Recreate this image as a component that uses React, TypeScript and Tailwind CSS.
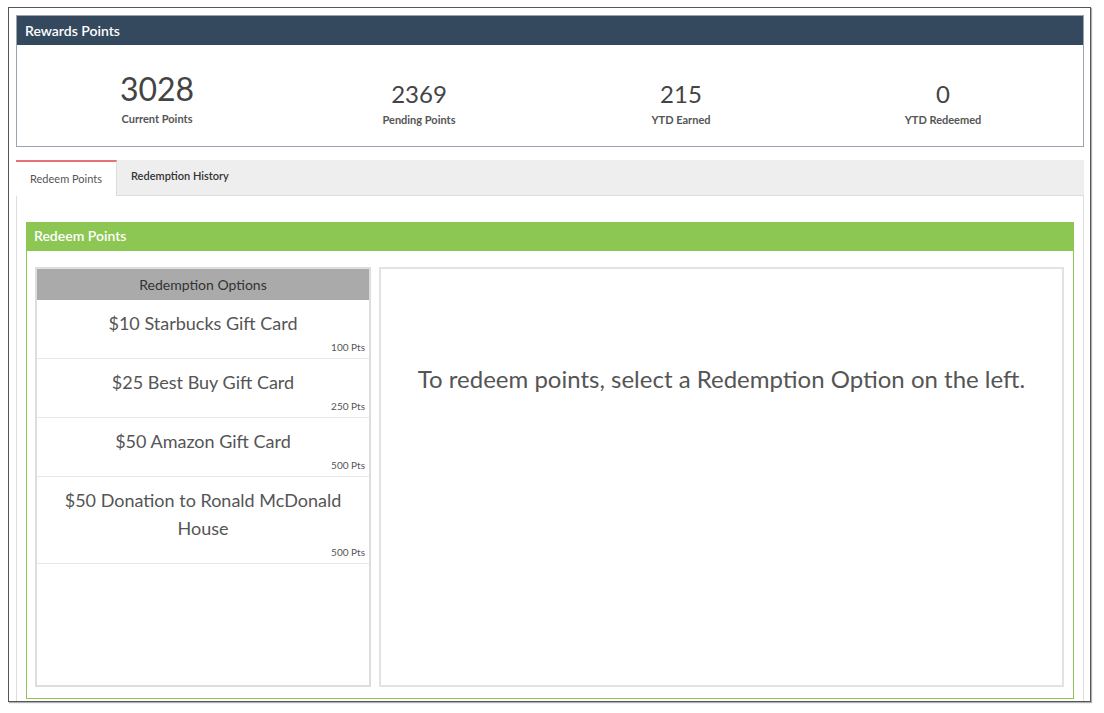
import React from "react";

const stats = [
  { value: "3028", label: "Current Points", big: true },
  { value: "2369", label: "Pending Points" },
  { value: "215", label: "YTD Earned" },
  { value: "0", label: "YTD Redeemed" },
];

const options = [
  { name: "$10 Starbucks Gift Card", pts: 100 },
  { name: "$25 Best Buy Gift Card", pts: 250 },
  { name: "$50 Amazon Gift Card", pts: 500 },
  { name: "$50 Donation to Ronald McDonald House", pts: 500 },
];

export default function App() {
  return (
    <div
      className="w-[1104px] h-[713px] bg-white pt-[7px] pl-[8px] text-[#555]"
      style={{ fontFamily: "Lato, 'Open Sans', sans-serif" }}
    >
      <div className="w-[1083px] h-[695px] border border-[#555] overflow-hidden pt-[7px] pl-[7px] pr-[6px] shadow-[1px_1px_1px_rgba(0,0,0,0.3)]">
        {/* rewards summary */}
        <div className="border border-[#9aa4ae]">
          <div className="h-[29px] bg-[#34495e] px-[8px] pb-[1px] flex items-center text-white text-[14px] font-semibold">
            Rewards Points
          </div>
          <div className="h-[101px] grid grid-cols-4 px-[9px]">
            {stats.map((s) => (
              <div key={s.label} className="flex flex-col items-center">
                {s.big ? (
                  <div className="mt-[26px] text-[32px] leading-[36px] text-[#444]">{s.value}</div>
                ) : (
                  <div className="mt-[34px] text-[24px] leading-[30px] text-[#444]">{s.value}</div>
                )}
                <div className={`text-[11px] font-bold text-[#555] ${s.big ? "mt-[4px]" : "mt-[3px]"}`}>
                  {s.label}
                </div>
              </div>
            ))}
          </div>
        </div>

        {/* tabs */}
        <div className="mt-[13px] h-[36px] bg-[#eee] border-b border-[#ddd] flex">
          <div className="w-[101px] h-[36px] bg-white border-t-2 border-[#e57373] border-r border-r-[#ddd] flex items-center justify-center text-[11px] text-[#555]">
            Redeem Points
          </div>
          <div className="px-[14px] flex items-center text-[11px] font-semibold text-[#333] -mt-[2px]">
            Redemption History
          </div>
        </div>

        <div className="border-x border-[#ddd] px-[9px] pt-[26px] h-[520px]">
          <div className="border border-[#8cc653]">
            <div className="h-[28px] bg-[#8cc653] px-[7px] pb-[3px] flex items-center text-white text-[14px] font-semibold">
              Redeem Points
            </div>
            <div className="flex gap-[8px] pt-[16px] pb-[11px] pl-[8px] pr-[9px]">
              <div className="w-[336px] h-[420px] border-2 border-[#ddd] shrink-0">
                <div className="h-[31px] bg-[#aaa] flex items-center justify-center text-[14px] text-[#333]">
                  Redemption Options
                </div>
                {options.map((o) => (
                  <div key={o.name} className="border-b border-[#e6e6e6] pt-[9px] pb-[3px] px-[4px]">
                    <div className="text-[18px] leading-[28px] text-center text-[#555] px-[14px]">{o.name}</div>
                    <div className="mt-[2px] text-[10px] leading-[16px] text-right text-[#555]">{o.pts} Pts</div>
                  </div>
                ))}
              </div>
              <div className="flex-1 h-[420px] border-2 border-[#e2e2e2] flex justify-center">
                <div className="mt-[95px] text-[24px] leading-[30px] text-[#555]">
                  To redeem points, select a Redemption Option on the left.
                </div>
              </div>
            </div>
          </div>
        </div>
      </div>
    </div>
  );
}
